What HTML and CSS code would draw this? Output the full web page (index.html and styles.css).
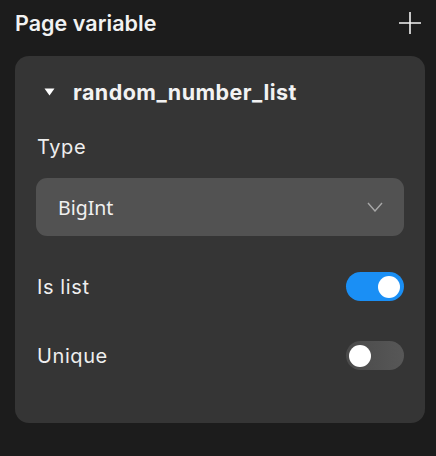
FILE: index.html
```html
<!DOCTYPE html>
<html>
<head>
<meta charset="utf-8">
<link rel="stylesheet" href="styles.css">
</head>
<body>
<div class="panel">
  <div class="header">
    <span class="title">Page variable</span>
    <svg class="plus" width="22" height="22" viewBox="0 0 22 22"><path d="M11 0V22M0 11H22" stroke="#f2f2f2" stroke-width="1.6" fill="none"/></svg>
  </div>
  <div class="card">
    <div class="var-head">
      <svg class="tri" width="11" height="8" viewBox="0 0 11 8"><path d="M0.5 0.5H10.5L5.5 7.5Z" fill="#fff"/></svg>
      <span class="var-name">random_number_list</span>
    </div>
    <div class="label type-label">Type</div>
    <div class="select">
      <span class="select-value">BigInt</span>
      <svg width="16" height="10" viewBox="0 0 16 10"><path d="M1 1L8 9L15 1" stroke="#a8a8a8" stroke-width="1.4" fill="none"/></svg>
    </div>
    <div class="row first">
      <span class="label">Is list</span>
      <span class="toggle on"><span class="knob"></span></span>
    </div>
    <div class="row second">
      <span class="label">Unique</span>
      <span class="toggle"><span class="knob"></span></span>
    </div>
  </div>
</div>
</body>
</html>
```
FILE: styles.css
```css
html, body {
  margin: 0;
  padding: 0;
  background: #1c1c1c;
}
body {
  font-family: Inter, "Noto Sans", sans-serif;
  color: #f2f2f2;
}
.panel {
  width: 436px;
  height: 456px;
  box-sizing: border-box;
  padding: 12px 11px 0 15px;
}
.header {
  display: flex;
  justify-content: space-between;
  align-items: center;
  height: 22px;
  padding-right: 4px;
}
.title {
  font-size: 21.5px;
  font-weight: 600;
  letter-spacing: 0.05px;
}
.card {
  margin-top: 22px;
  background: #353535;
  border-radius: 14px;
  height: 367px;
  box-sizing: border-box;
  padding: 22px 21px 0 21px;
}
.var-head {
  display: flex;
  align-items: center;
  height: 28px;
}
.tri {
  margin-left: 8px;
  margin-right: 18px;
}
.var-name {
  font-size: 21.5px;
  font-weight: 700;
  letter-spacing: 0.45px;
}
.label {
  font-size: 20px;
  font-weight: 400;
  letter-spacing: 0.6px;
  color: #eeeeee;
  line-height: 24px;
}
.type-label {
  margin-top: 29px;
  margin-left: 1px;
}
.select {
  margin-top: 19px;
  height: 58px;
  background: #525252;
  border-radius: 11px;
  display: flex;
  align-items: center;
  justify-content: space-between;
  padding: 0 21px 0 22px;
}
.select-value {
  font-family: "Noto Sans", sans-serif;
  font-size: 19.5px;
  color: #f0f0f0;
}
.row {
  display: flex;
  justify-content: space-between;
  align-items: center;
  height: 29px;
  padding-left: 1px;
}
.row.first {
  margin-top: 36px;
}
.row.second {
  margin-top: 40px;
}
.toggle {
  width: 58px;
  height: 29px;
  border-radius: 15px;
  background: linear-gradient(90deg, #4a4a4a, #575757);
  display: flex;
  align-items: center;
  padding: 0 3px;
  box-sizing: border-box;
}
.toggle.on {
  background: #1a8ff5;
  justify-content: flex-end;
  padding-right: 4px;
}
.knob {
  width: 22px;
  height: 22px;
  border-radius: 50%;
  background: #ffffff;
}
```
